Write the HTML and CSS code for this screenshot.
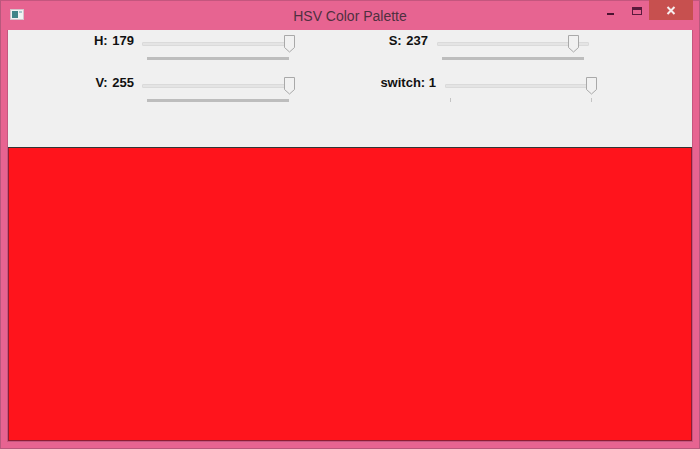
FILE: index.html
```html
<!DOCTYPE html>
<html lang="en">
<head>
<meta charset="UTF-8" />
<title>HSV Color Palette</title>
<link rel="stylesheet" href="styles.css">
</head>
<body>

<div class="window">

  <div class="titlebar">
    <svg class="app-icon" width="15" height="14" viewBox="0 0 15 14">
      <rect x="0.5" y="1.5" width="13" height="10" fill="#f0f2f2" stroke="#d6c3cc"/>
      <rect x="2" y="3" width="6" height="7" fill="#3f8488"/>
      <rect x="9" y="3" width="3" height="2" fill="#a9c8cc"/>
    </svg>
    <span class="title">HSV Color Palette</span>
    <div class="controls">
      <svg class="ctl-min" width="7" height="2" viewBox="0 0 7 2"><rect width="7" height="2" fill="#4a1230"/></svg>
      <svg class="ctl-max" width="10" height="8" viewBox="0 0 10 8"><rect x="0.5" y="0.5" width="9" height="7" fill="none" stroke="#5a1a3c"/><rect x="1" y="1" width="8" height="2" fill="#5a1a3c"/></svg>
      <div class="ctl-close">
        <svg width="10" height="9" viewBox="0 0 10 9"><path d="M1.5 1 L8.5 8 M8.5 1 L1.5 8" stroke="#f6eeee" stroke-width="2"/></svg>
      </div>
    </div>
  </div>

  <div class="client">
    <div class="panel">

      <div class="trackbar">
        <label>H: 179</label>
        <div class="slider">
          <div class="groove"></div>
          <svg class="thumb" style="left: 142px" width="11" height="18" viewBox="0 0 11 18"><path d="M0.5 0.5 H10.5 V12.5 L5.5 17 L0.5 12.5 Z" fill="#f1f1f1" stroke="#a9a9a9"/></svg>
          <div class="ticks"></div>
        </div>
      </div>

      <div class="trackbar trackbar-right">
        <label>S: 237</label>
        <div class="slider">
          <div class="groove"></div>
          <svg class="thumb" style="left: 131px" width="11" height="18" viewBox="0 0 11 18"><path d="M0.5 0.5 H10.5 V12.5 L5.5 17 L0.5 12.5 Z" fill="#f1f1f1" stroke="#a9a9a9"/></svg>
          <div class="ticks"></div>
        </div>
      </div>

      <div class="trackbar">
        <label>V: 255</label>
        <div class="slider">
          <div class="groove"></div>
          <svg class="thumb" style="left: 142px" width="11" height="18" viewBox="0 0 11 18"><path d="M0.5 0.5 H10.5 V12.5 L5.5 17 L0.5 12.5 Z" fill="#f1f1f1" stroke="#a9a9a9"/></svg>
          <div class="ticks"></div>
        </div>
      </div>

      <div class="trackbar trackbar-right trackbar-wide">
        <label>switch: 1</label>
        <div class="slider">
          <div class="groove"></div>
          <svg class="thumb" style="left: 141px" width="11" height="18" viewBox="0 0 11 18"><path d="M0.5 0.5 H10.5 V12.5 L5.5 17 L0.5 12.5 Z" fill="#f1f1f1" stroke="#a9a9a9"/></svg>
          <div class="ticks ticks-ends"><i></i><i></i></div>
        </div>
      </div>

    </div>
    <div class="color"></div>
  </div>

</div>

</body>
</html>
```

FILE: styles.css
```css
html, body {
  margin: 0;
  height: 100%;
}

body {
  font-family: "Liberation Sans", Arial, sans-serif;
  overflow: hidden;
}

.window {
  height: 449px;
  box-sizing: border-box;
  display: flex;
  flex-direction: column;
  background: #e76491;
  border: 1px solid #b9587c;
  border-top-color: #c4567e;
}

/* Title bar */
.titlebar {
  height: 29px;
  flex: none;
  display: flex;
  align-items: center;
  justify-content: center;
  position: relative;
}

.app-icon {
  position: absolute;
  left: 9px;
  top: 7px;
}

.title {
  font-size: 14px;
  color: #4f3040;
  margin-top: 1px;
}

.controls {
  position: absolute;
  top: -1px;
  right: 6px;
  display: flex;
  align-items: flex-start;
}

.ctl-min {
  margin: 13px 18px 0 0;
}

.ctl-max {
  margin: 7px 7px 0 0;
}

.ctl-close {
  width: 44px;
  height: 20px;
  background: #c7504f;
  display: flex;
  align-items: center;
  justify-content: center;
}

/* Client area */
.client {
  flex: 1;
  margin: 0 6px 6px;
  display: flex;
  flex-direction: column;
  border: 1px solid #c4577f;
  border-top: none;
}

.panel {
  height: 118px;
  flex: none;
  box-sizing: border-box;
  background: #f0f0f0;
  border-bottom: 1px solid #333;
  display: grid;
  grid-template-columns: 294px 1fr;
  grid-auto-rows: 42px;
}

.trackbar {
  display: flex;
  align-items: flex-start;
  gap: 8px;
}

.trackbar-right {
  gap: 9px;
}

.trackbar label {
  width: 126px;
  text-align: right;
  font-size: 13px;
  font-weight: bold;
  line-height: 15px;
  margin-top: 3px;
  color: #111;
  word-spacing: 1px;
}

.trackbar-wide label {
  width: 134px;
  word-spacing: 0;
}

.slider {
  position: relative;
  width: 152px;
  height: 42px;
}

.groove {
  height: 2px;
  margin-top: 12px;
  background: #e4e4e4;
  border: 1px solid #dadada;
  border-radius: 1px;
}

.thumb {
  position: absolute;
  top: 5px;
}

.ticks {
  height: 3px;
  margin: 11px 5px 0;
  background: #bdbdbd;
}

.ticks-ends {
  height: 4px;
  margin-top: 10px;
  background: none;
  display: flex;
  justify-content: space-between;
}

.ticks-ends i {
  width: 1px;
  background: #c4c4c4;
}

.color {
  flex: 1;
  background: #ff141c;
  border: 1px solid #8f1c34;
  border-top: none;
}
```
